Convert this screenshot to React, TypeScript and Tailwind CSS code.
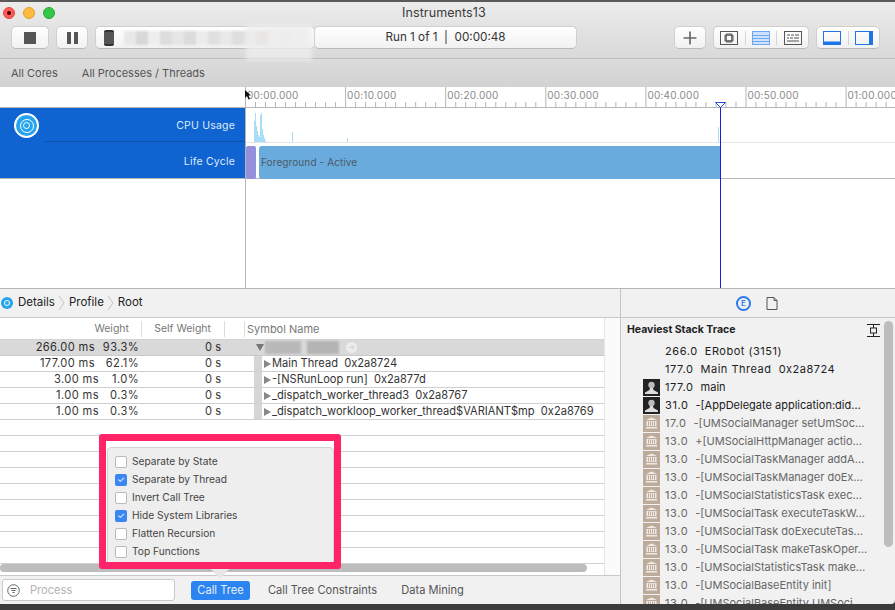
import { Plus } from "lucide-react";

const rulerLabels = ["00:00.000", "00:10.000", "00:20.000", "00:30.000", "00:40.000", "00:50.000", "01:00.000"];

const tableRows = [
  { time: "177.00 ms", pct: "62.1%", name: "Main Thread  0x2a8724", wide: true },
  { time: "3.00 ms", pct: "1.0%", name: "-[NSRunLoop run]  0x2a877d", wide: false },
  { time: "1.00 ms", pct: "0.3%", name: "_dispatch_worker_thread3  0x2a8767", wide: false },
  { time: "1.00 ms", pct: "0.3%", name: "_dispatch_workloop_worker_thread$VARIANT$mp  0x2a8769", wide: false },
];

const options = [
  { label: "Separate by State", on: false },
  { label: "Separate by Thread", on: true },
  { label: "Invert Call Tree", on: false },
  { label: "Hide System Libraries", on: true },
  { label: "Flatten Recursion", on: false },
  { label: "Top Functions", on: false },
];

const stack = [
  { n: "266.0", name: "ERobot (3151)", icon: "" },
  { n: "177.0", name: "Main Thread  0x2a8724", icon: "" },
  { n: "177.0", name: "main", icon: "user" },
  { n: "31.0", name: "-[AppDelegate application:did…", icon: "user" },
  { n: "17.0", name: "-[UMSocialManager setUmSoc…", icon: "lib" },
  { n: "13.0", name: "+[UMSocialHttpManager actio…", icon: "lib" },
  { n: "13.0", name: "-[UMSocialTaskManager addA…", icon: "lib" },
  { n: "13.0", name: "-[UMSocialTaskManager doEx…", icon: "lib" },
  { n: "13.0", name: "-[UMSocialStatisticsTask exec…", icon: "lib" },
  { n: "13.0", name: "-[UMSocialTask executeTaskW…", icon: "lib" },
  { n: "13.0", name: "-[UMSocialTask doExecuteTas…", icon: "lib" },
  { n: "13.0", name: "-[UMSocialTask makeTaskOper…", icon: "lib" },
  { n: "13.0", name: "-[UMSocialStatisticsTask make…", icon: "lib" },
  { n: "13.0", name: "-[UMSocialBaseEntity init]", icon: "lib" },
  { n: "13.0", name: "-[UMSocialBaseEntity UMSoci…", icon: "lib" },
];

function UserIcon() {
  return (
    <svg width="17" height="17" viewBox="0 0 17 17" className="shrink-0">
      <rect width="17" height="17" fill="#222" />
      <circle cx="8.5" cy="6" r="3.2" fill="#bbb" />
      <path d="M7 9 L10 9 L10.5 11 L15 13.5 L15 15 L2 15 L2 13.5 L6.5 11 Z" fill="#ddd" />
    </svg>
  );
}

function LibIcon() {
  return (
    <svg width="17" height="17" viewBox="0 0 17 17" className="shrink-0">
      <rect width="17" height="17" fill="#bcab9a" />
      <path d="M3 5 L8.5 2.5 L14 5 Z" fill="#f0ebe5" />
      <path d="M3.5 6 H13.5 V11 H3.5 Z" fill="#f0ebe5" />
      <path d="M5.5 6.5 V10.5 M7.5 6.5 V10.5 M9.5 6.5 V10.5 M11.5 6.5 V10.5" stroke="#bcab9a" strokeWidth="1" />
      <rect x="3" y="12" width="11" height="1.5" fill="#f0ebe5" />
    </svg>
  );
}

function Ruler() {
  const ticks = [];
  for (let i = 0; i < 66; i++) {
    const x = i * 10.01 + 0.5;
    ticks.push(<line key={i} x1={x} x2={x} y1={i % 10 === 0 ? 0 : 15} y2="20" stroke="#b5b5b5" />);
  }
  return (
    <svg width="650" height="20" className="block">
      {ticks}
    </svg>
  );
}

function CpuChart() {
  const bars = [
    [8, 22], [9, 30], [10, 17], [11, 12], [12, 8], [13, 6], [14, 28], [15, 30], [16, 14], [17, 8], [18, 5], [19, 2],
    [46, 11], [101, 5], [472, 16],
  ];
  return (
    <svg width="650" height="35" className="block">
      {bars.map(([x, h]) => (
        <rect key={x} x={x} y={35 - h} width="1" height={h} fill="#a9dcf6" />
      ))}
    </svg>
  );
}

function Seg({ children, last }: { children: React.ReactNode; last?: boolean }) {
  return (
    <div className={`flex-1 flex items-center justify-center ${last ? "" : "border-r border-[#d4d4d4]"}`}>{children}</div>
  );
}

const btn = "h-[23px] bg-gradient-to-b from-white to-[#f1f1f1] border border-[#cfcfcf] border-b-[#b9b9b9] rounded-[5px] flex items-center";

export default function App() {
  return (
    <div className="relative w-[895px] h-[610px] overflow-hidden bg-[#3c3c3c] font-['Inter',sans-serif] text-[#2b2b2b] flex flex-col">
      <div className="h-[2px] bg-[#5a5a5a] shrink-0" />

      {/* Title bar + toolbar */}
      <div className="h-[57px] shrink-0 bg-gradient-to-b from-[#ececec] to-[#d9d9d9] border-b border-[#bdbdbd] px-[3px] flex flex-col">
        <div className="relative h-[21px] flex items-center">
          <div className="flex gap-2">
            <span className="w-3 h-3 rounded-full bg-[#fc5b57] border border-[#e2463f] flex items-center justify-center">
              <span className="w-1 h-1 rounded-full bg-[#4d0000]" />
            </span>
            <span className="w-3 h-3 rounded-full bg-[#fdbb40] border border-[#e0a028]" />
            <span className="w-3 h-3 rounded-full bg-[#33c748] border border-[#27aa35]" />
          </div>
          <div className="absolute left-[399px] top-[2px] text-[12.5px] text-[#3b3b3b] tracking-[0.1px]">Instruments13</div>
        </div>
        <div className="flex items-center pt-[3px] pl-[8px]">
          <div className={`${btn} w-[38px] justify-center`}>
            <span className="w-3 h-3 bg-[#555]" />
          </div>
          <div className={`${btn} w-[32px] ml-[7px] justify-center gap-[3px]`}>
            <span className="w-1 h-3 bg-[#555]" />
            <span className="w-1 h-3 bg-[#555]" />
          </div>
          <div className={`${btn} w-[220px] ml-[7px] pl-[8px]`}>
            <span className="w-[10px] h-[16px] bg-[#555] rounded-[2px] border-y-2 border-[#333]" />
            <div className="flex ml-[10px] blur-[1px]">
              {["#e8e8e8", "#d8d8d8", "#eee", "#ddd", "#e6e6e6", "#dcdcdc", "#ececec", "#e0e0e0", "#e9e9e9", "#dedede", "#e4e4e4", "#d8cfc6", "#eee", "#eaeaea", "#f2f2f2"].map((c, i) => (
                <span key={i} className="w-[12px] h-[14px]" style={{ background: c }} />
              ))}
            </div>
          </div>
          <div className={`${btn} w-[263px] ml-[-1px] justify-center text-[11.7px] text-[#333] whitespace-pre`}>Run 1 of 1  |  00:00:48</div>
          <div className={`${btn} w-[32px] ml-[97px] justify-center`}>
            <Plus size={20} strokeWidth={2} className="text-[#666]" />
          </div>
          <div className={`${btn} w-[96px] ml-[7px]`}>
            <Seg>
              <svg width="18" height="14" viewBox="0 0 18 14">
                <rect x="0.5" y="0.5" width="17" height="13" fill="none" stroke="#555" />
                <rect x="6" y="4" width="6" height="6" fill="none" stroke="#555" strokeWidth="1.6" />
                <path d="M7 2V3M9 2V3M11 2V3M7 11V12M9 11V12M11 11V12M4 5H5M4 7H5M4 9H5M13 5H14M13 7H14M13 9H14" stroke="#555" />
              </svg>
            </Seg>
            <Seg>
              <svg width="18" height="14" viewBox="0 0 18 14">
                <rect x="0.5" y="0.5" width="17" height="13" fill="#cfe2fb" stroke="#6ea7f2" />
                <path d="M1 4.5H17M1 7.5H17M1 10.5H17" stroke="#6ea7f2" />
              </svg>
            </Seg>
            <Seg last>
              <svg width="18" height="14" viewBox="0 0 18 14">
                <rect x="0.5" y="0.5" width="17" height="13" fill="none" stroke="#555" />
                <path d="M3 4H6M7 4H10M11 4H15M3 7H5M6 7H9M10 7H15M3 10H15" stroke="#555" />
              </svg>
            </Seg>
          </div>
          <div className={`${btn} w-[64px] ml-[7px]`}>
            <Seg>
              <svg width="18" height="14" viewBox="0 0 18 14">
                <rect x="0.5" y="0.5" width="17" height="13" fill="none" stroke="#1f74ea" />
                <rect x="1" y="10.5" width="16" height="3" fill="#1f74ea" />
              </svg>
            </Seg>
            <Seg last>
              <svg width="18" height="14" viewBox="0 0 18 14">
                <rect x="0.5" y="0.5" width="17" height="13" fill="none" stroke="#1f74ea" />
                <rect x="14" y="1" width="3" height="12" fill="#1f74ea" />
              </svg>
            </Seg>
          </div>
        </div>
      </div>

      {/* Filter bar */}
      <div className="h-[28px] shrink-0 bg-gradient-to-b from-[#dcdcdc] to-[#d2d2d2] flex items-center text-[11px] text-[#555] pl-[11px] gap-[24px]">
        <span>All Cores</span>
        <span>All Processes / Threads</span>
      </div>

      {/* Timeline */}
      <div className="h-[201px] shrink-0 bg-white flex flex-col">
        <div className="h-[21px] flex border-b border-[#b5b5b5]">
          <div className="w-[245px] shrink-0" />
          <div className="relative flex-1 overflow-hidden">
            <Ruler />
            <div className="absolute inset-0 flex text-[10px] text-[#8a8a8a] tracking-[0.25px] pt-[1px]">
              {rulerLabels.map((l) => (
                <span key={l} className="w-[100.1px] shrink-0 pl-[2px]">{l}</span>
              ))}
            </div>
          </div>
        </div>
        <div className="h-[71px] flex border-b border-[#b5b5b5]">
          <div className="w-[245px] shrink-0 bg-[#0f64d2] text-[#dfeafa] text-[10.5px] tracking-[0.2px] flex flex-col">
            <div className="h-[34px] flex">
              <div className="w-[45px] flex pt-[5px] pl-[14px]">
                <span className="w-[25px] h-[25px] rounded-full bg-[#27a4ee] border-2 border-white flex items-center justify-center shrink-0">
                  <span className="w-[14px] h-[14px] rounded-full border border-white flex items-center justify-center">
                    <span className="w-[7px] h-[7px] rounded-full border border-white" />
                  </span>
                </span>
              </div>
              <div className="flex-1 border-b border-[#0b52ad] text-right pr-[10px] pt-[10px]">CPU Usage</div>
            </div>
            <div className="flex-1 text-right pr-[10px] pt-[12px]">Life Cycle</div>
          </div>
          <div className="flex-1 flex flex-col border-l border-[#b5b5b5]">
            <div className="h-[35px] border-b border-[#e4e4e4] overflow-hidden"><CpuChart /></div>
            <div className="flex pt-[3px] h-[35px]">
              <div className="w-[10px] h-[33px] bg-[#9490dc] rounded-[2px]" />
              <div className="w-[461px] h-[33px] ml-[3px] bg-[#6aabdd] rounded-l-[3px] text-[10px] text-[#4a5a68] pl-[2px] pt-[9px] tracking-[0.1px]">Foreground - Active</div>
            </div>
          </div>
        </div>
        <div className="flex-1 flex">
          <div className="w-[245px] shrink-0" />
          <div className="flex-1 border-l border-[#b5b5b5]" />
        </div>
      </div>

      {/* Details */}
      <div className="h-[316px] shrink-0 flex border-t border-[#b5b5b5]">
        <div className="w-[620px] shrink-0 flex flex-col bg-white">
          <div className="h-[29px] shrink-0 bg-[#f1f1f1] border-b border-[#c9c9c9] flex items-center text-[11.5px] text-[#222]">
            <span className="w-[12px] h-[12px] rounded-full bg-[#27a4ee] ml-[1px] flex items-center justify-center">
              <span className="w-[6px] h-[6px] rounded-full border border-white" />
            </span>
            <span className="ml-[5px]">Details</span>
            <svg width="8" height="16" viewBox="0 0 8 16" className="mx-[3px]"><path d="M1 1 L6 8 L1 15" fill="none" stroke="#c4c4c4" /></svg>
            <span>Profile</span>
            <svg width="8" height="16" viewBox="0 0 8 16" className="mx-[3px]"><path d="M1 1 L6 8 L1 15" fill="none" stroke="#c4c4c4" /></svg>
            <span>Root</span>
          </div>
          <div className="relative flex-1 flex overflow-hidden">
            <div className="w-[605px] shrink-0 border-r border-[#e4e4e4]">
              <div className="h-[22px] flex items-center text-[10.5px] text-[#777] border-b border-[#d4d4d4]">
                <div className="w-[142px] h-[16px] border-r border-[#dcdcdc] text-right pr-[12px]">Weight</div>
                <div className="w-[83px] h-[16px] border-r border-[#dcdcdc] text-right pr-[13px]">Self Weight</div>
                <div className="w-[20px] h-[16px] border-r border-[#dcdcdc]" />
                <div className="pl-[2px] h-[16px] text-[11px]">Symbol Name</div>
              </div>
              <div className="h-[16px] flex items-center bg-[#d9d9d9] border-b border-[#c9c9c9] text-[11.1px]">
                <div className="w-[95px] text-right tracking-[0.4px]">266.00 ms</div>
                <div className="w-[44px] text-right tracking-[0.4px]">93.3%</div>
                <div className="w-[82px] text-right">0 s</div>
                <div className="ml-[35px] w-0 h-0 border-x-[4px] border-x-transparent border-t-[7px] border-t-[#777]" />
                <div className="flex ml-[1px] blur-[1px]">
                  <span className="w-[36px] h-[13px] bg-[#b9b9b9]" />
                  <span className="w-[6px] h-[13px]" />
                  <span className="w-[32px] h-[13px] bg-[#b4b4b4]" />
                </div>
                <span className="ml-[7px] w-[11px] h-[11px] rounded-full bg-[#ececec] text-[#d0d0d0] text-[8px] leading-[11px] text-center">→</span>
              </div>
              {tableRows.map((r) => (
                <div key={r.name} className="h-[16px] flex items-center border-b border-[#cfcfcf] text-[11.1px] text-[#333]">
                  <div className={`w-[99px] text-right tracking-[0.4px] ${r.wide ? "pr-[4px]" : ""}`}>{r.time}</div>
                  <div className="w-[40px] text-right tracking-[0.4px]">{r.pct}</div>
                  <div className="w-[82px] text-right">0 s</div>
                  <div className="ml-[33px] w-[8px] h-full bg-[#d6d6d6]" />
                  <div className="ml-[2px] w-0 h-0 border-y-[4px] border-y-transparent border-l-[7px] border-l-[#888]" />
                  <div className="ml-[1px] whitespace-pre">{r.name}</div>
                </div>
              ))}
              {Array.from({ length: 9 }).map((_, i) => (
                <div key={i} className="h-[16px] border-b border-[#cfcfcf]" />
              ))}
            </div>
            <div className="flex-1 bg-[#fbfbfb]" />
            <div className="absolute left-0 bottom-[3px] w-[587px] h-[8px] rounded-full bg-[#bdbdbd]" />
          </div>
          <div className="h-[29px] shrink-0 bg-[#f1f1f1] border-t border-[#c9c9c9] flex items-center text-[11.1px] text-[#555]">
            <div className="ml-[2px] w-[173px] h-[22px] bg-white border border-[#c9c9c9] rounded-[3px] flex items-center pl-[4px]">
              <svg width="13" height="13" viewBox="0 0 13 13">
                <circle cx="6.5" cy="6.5" r="5.8" fill="none" stroke="#666" />
                <path d="M3.5 4.5H9.5M4.5 6.5H8.5M5.5 8.5H7.5" stroke="#666" />
              </svg>
              <span className="ml-[10px] text-[#b4b4b4]">Process</span>
            </div>
            <div className="ml-[16px] w-[59px] h-[19px] rounded-[3px] bg-[#2b84f0] text-[#e6f0fd] flex items-center justify-center">Call Tree</div>
            <span className="ml-[18px]">Call Tree Constraints</span>
            <span className="ml-[24px]">Data Mining</span>
          </div>
        </div>

        <div className="flex-1 flex flex-col bg-[#f1f1f1] border-l border-[#c4c4c4] rounded-br-[4px] overflow-hidden">
          <div className="h-[29px] shrink-0 border-b border-[#c9c9c9] flex items-center">
            <span className="ml-[115px] w-[15px] h-[15px] rounded-full border-2 border-[#2b7bee] text-[#2b7bee] text-[8px] font-semibold flex items-center justify-center">E</span>
            <svg width="12" height="13" viewBox="0 0 12 13" className="ml-[15px]">
              <path d="M1 .5H8L11 3.5V12.5H1Z" fill="none" stroke="#555" />
              <path d="M8 .5V3.5H11" fill="none" stroke="#555" />
            </svg>
          </div>
          <div className="flex-1 flex overflow-hidden">
            <div className="w-[263px] shrink-0 pl-[6px]">
              <div className="h-[24px] flex items-center justify-between text-[10.5px] font-bold text-[#222]">
                <span>Heaviest Stack Trace</span>
                <svg width="13" height="13" viewBox="0 0 13 13" className="mr-[4px]">
                  <path d="M0 .5H13M0 12.5H13" stroke="#222" strokeWidth="1.2" />
                  <path d="M6.5 1V4M6.5 9V12" stroke="#222" />
                  <rect x="3.5" y="4" width="6" height="5" fill="none" stroke="#222" />
                </svg>
              </div>
              {stack.map((s, i) => (
                <div key={i} className={`h-[18px] flex items-center text-[11px] whitespace-pre ${s.icon === "lib" ? "text-[#666]" : "text-[#222]"}`}>
                  <div className="w-[17px] ml-[16px] shrink-0">
                    {s.icon === "user" && <UserIcon />}
                    {s.icon === "lib" && <LibIcon />}
                  </div>
                  <span className="ml-[5px] tracking-[0.6px]">{s.n}</span>
                  <span className={`ml-[7px] ${i < 2 ? "tracking-[0.5px]" : ""}`}>{s.name}</span>
                </div>
              ))}
            </div>
            <div className="pt-[3px]">
              <div className="w-[9px] h-[226px] rounded-full bg-[#bdbdbd]" />
            </div>
          </div>
        </div>
      </div>

      {/* Bottom edge of the desktop behind the window */}
      <div className="flex-1 bg-[#3c3c3c]" />

      {/* Playhead */}
      <div className="absolute left-[720px] top-[102px] w-[1px] h-[186px] bg-[#1a1ae0]" />
      <svg width="11" height="6" viewBox="0 0 11 6" className="absolute left-[715px] top-[102px]">
        <path d="M.5 .5H10.5L5.5 5.5Z" fill="white" stroke="#2a52e0" />
      </svg>

      {/* Cursor at ruler start */}
      <svg width="7" height="10" viewBox="0 0 7 10" className="absolute left-[245px] top-[90px]">
        <path d="M0 0L6 5.5H3.5L5 9L3.5 9.5L2 6L0 8Z" fill="#111" />
      </svg>

      {/* Smudge over the device name */}
      <div className="absolute left-[246px] top-[24px] w-[66px] h-[36px] bg-[#eeeeee] blur-[2px] opacity-80" />

      {/* Call tree popover */}
      <div className="absolute left-[99px] top-[434px] w-[242px] h-[135px] bg-white border-[7px] border-[#ff2467] rounded-[3px] overflow-hidden">
        <div className="ml-[1px] mt-[6px] h-[130px] bg-[#eeeeee] border border-[#d2d2d2] rounded-t-[4px] pl-[7px] pt-[5px]">
          {options.map((o) => (
            <div key={o.label} className="h-[18px] flex items-center text-[10.2px] text-[#444]">
              {o.on ? (
                <span className="w-[12px] h-[12px] rounded-[2px] bg-[#3a87f2] text-white text-[9px] leading-[12px] text-center">✓</span>
              ) : (
                <span className="w-[12px] h-[12px] rounded-[2px] bg-white border border-[#b9b9b9]" />
              )}
              <span className="ml-[5px]">{o.label}</span>
            </div>
          ))}
        </div>
      </div>
      <div className="absolute left-[211px] top-[569px] w-0 h-0 border-x-[9px] border-x-transparent border-t-[10px] border-t-[#e6e6e6]" />
    </div>
  );
}
